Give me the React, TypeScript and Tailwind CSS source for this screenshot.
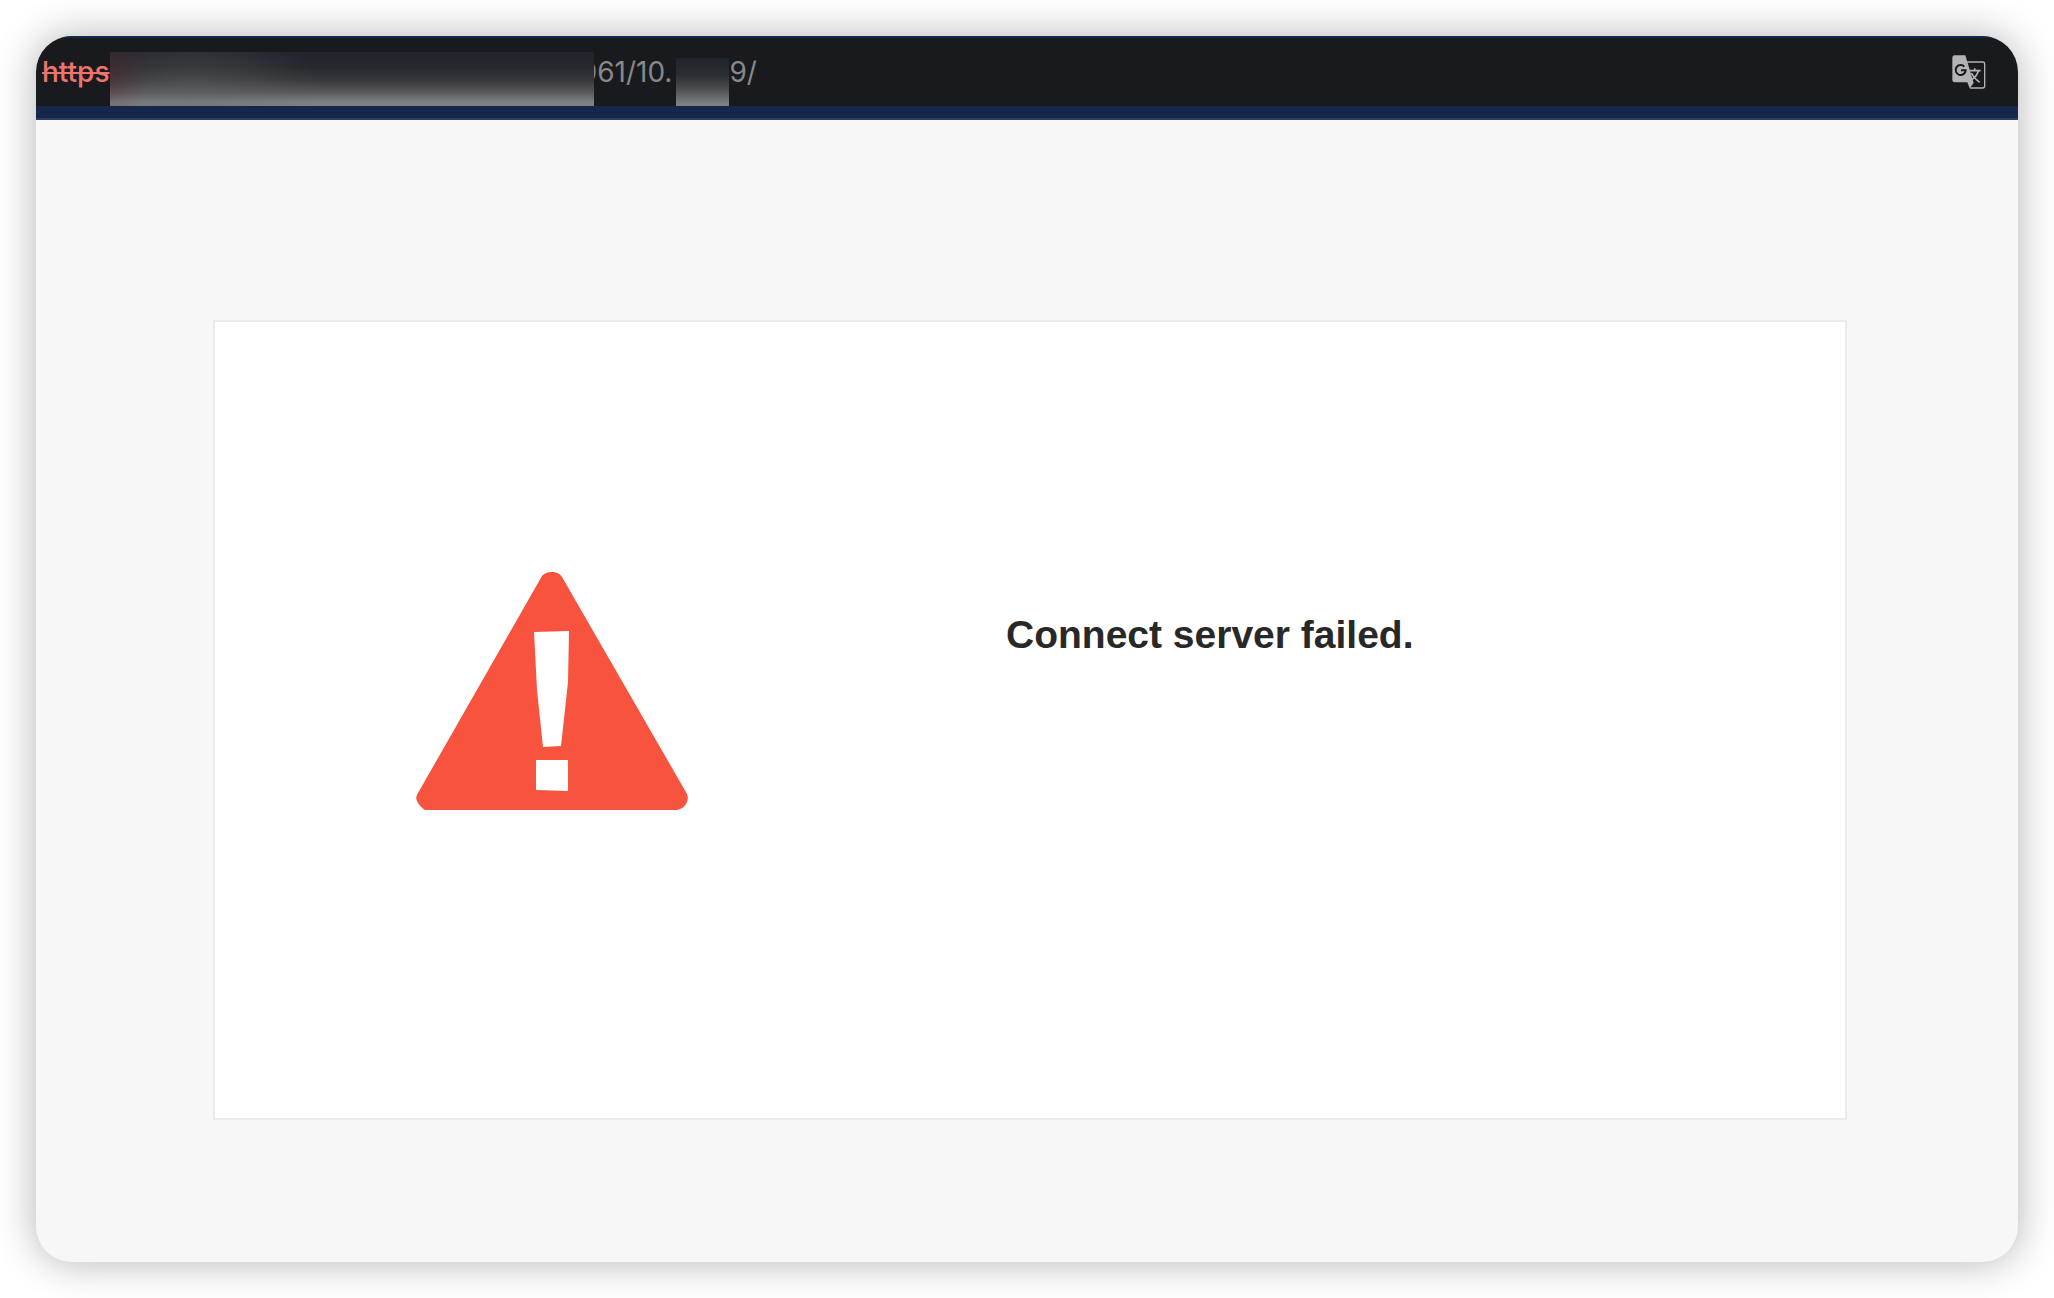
function TranslateIcon() {
  return (
    <svg viewBox="0 0 102 102" className="size-[34px]" fill="none" aria-hidden="true">
      <path d="M45 21H92Q98 21 98 27V93Q98 99 92 99H54" stroke="currentColor" strokeWidth="4" />
      <path
        d="M50 47H86M68 40V47M79 48Q74 66 56 76M58 54Q66 70 83 82"
        stroke="currentColor"
        strokeWidth="5"
      />
      <path d="M8 1H40L65 84L53 100L46 82H8Q1 82 1 75V8Q1 1 8 1Z" fill="currentColor" />
      <path d="M37 35A15 15 0 1 0 41 46H27" stroke="#191a1d" strokeWidth="6" />
    </svg>
  );
}

function AddressBar() {
  return (
    <header className="flex h-[84px] flex-col border-y-2 border-t-[#16284a] border-b-[#2b3f62] bg-[#191a1d]">
      <div className="flex flex-1 items-center justify-between pr-8 pl-1.5">
        <p className="flex h-full items-center font-['Inter',sans-serif] text-[28px] leading-[34px] text-[#87888a]">
          <span className="font-medium text-[#ee736d] line-through decoration-2">https</span>
          <span
            aria-hidden="true"
            className="relative z-10 h-[54px] w-[484px] self-end bg-[radial-gradient(ellipse_40px_50px_at_0_20px,#5a252d66,transparent),radial-gradient(ellipse_130px_60px_at_80px_35px,#6668696b,transparent),linear-gradient(to_bottom,#21242f,#26282d_30%,#37383b_52%,#59595d_75%,#7e7f83_92%)]"
          />
          <span className="-ml-3.5">061/10.</span>
          <span
            aria-hidden="true"
            className="ml-1 h-[48px] w-[53px] self-end bg-[linear-gradient(to_bottom,#21242f,#2b2d31_35%,#46474a_60%,#7e7f83_95%)]"
          />
          <span>9/</span>
        </p>
        <button type="button" aria-label="Translate this page" className="text-[#b3b3b5]">
          <TranslateIcon />
        </button>
      </div>
      <div className="h-3 bg-[#16284a]" />
    </header>
  );
}

function WarningIcon() {
  return (
    <svg viewBox="0 0 272 238" className="w-[272px] shrink-0" aria-hidden="true">
      <path
        fill="#f7533f"
        d="M126 4Q129 0 136 0T146 5L271 222Q273 227 270 232Q267 237 261 238H9Q3 234 1 229Q-1 225 2 221Z"
      />
      <path fill="#fff" d="M118 60L153 59L152 110L145 174L127 175L121 118Z" />
      <path fill="#fff" d="M120 188H152L152 219L120 218Z" />
    </svg>
  );
}

export default function App() {
  return (
    <div className="flex min-h-screen bg-white p-9">
      <div className="flex flex-1 flex-col overflow-hidden rounded-[36px] bg-[#f7f7f7] shadow-[0_0_40px_rgba(0,0,0,0.3)]">
        <AddressBar />
        <main className="flex flex-1 flex-col pt-[200px] pr-[171px] pb-[142px] pl-[177px]">
          <section className="flex flex-1 items-start border-2 border-[#ebebeb] bg-white pt-[250px]">
            <div className="flex w-[791px] pl-[201px]">
              <WarningIcon />
            </div>
            <h1 className="pt-10 font-['Liberation_Sans',Arial,sans-serif] text-[39px] leading-[46px] font-bold text-[#282828]">
              Connect server failed.
            </h1>
          </section>
        </main>
      </div>
    </div>
  );
}
